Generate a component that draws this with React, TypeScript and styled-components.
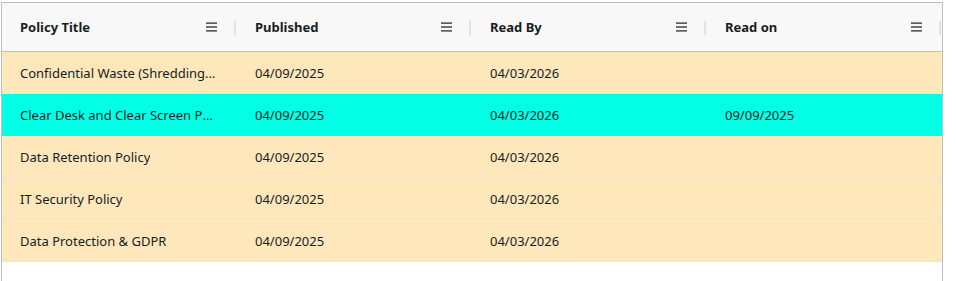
import React from "react";
import styled, { createGlobalStyle } from "styled-components";

const Global = createGlobalStyle`
  html, body { margin: 0; padding: 0; background: #ffffff; }
  body { font-family: "Noto Sans", "Open Sans", sans-serif; overflow: hidden; }
`;

const Page = styled.div`
  padding: 2px 0 0 1px;
`;

const Grid = styled.div`
  width: 940px;
  height: 300px;
  border: 1px solid #babfc7;
  background: #ffffff;
  color: #181d1f;
`;

const HeaderRow = styled.div`
  display: grid;
  grid-template-columns: repeat(4, 235px);
  height: 48px;
  background: #f8f8f8;
  border-bottom: 1px solid #babfc7;
`;

const HeaderCell = styled.div`
  position: relative;
  display: flex;
  align-items: center;
  padding: 0 20px 0 18px;
  font-weight: 700;
  font-size: 13px;
  &::after {
    content: "";
    position: absolute;
    right: 1px;
    top: 18px;
    width: 2px;
    height: 14px;
    background: #dde2eb;
  }
`;

const HeaderLabel = styled.span`
  flex: 1;
`;

const MenuIcon = styled.svg`
  width: 11px;
  height: 10px;
  display: block;
`;

const Row = styled.div<{ $selected?: boolean }>`
  display: grid;
  grid-template-columns: repeat(4, 235px);
  height: 41px;
  background: ${(p) => (p.$selected ? "#02ffe5" : "#fde7bb")};
  border-bottom: 1px solid ${(p) => (p.$selected ? "#02ffe5" : "#f0e3cc")};
`;

const Cell = styled.div`
  display: flex;
  align-items: center;
  padding: 0 18px;
  font-size: 13px;
  min-width: 0;
`;

const CellText = styled.span`
  white-space: nowrap;
  overflow: hidden;
  text-overflow: ellipsis;
`;

const columns = ["Policy Title", "Published", "Read By", "Read on"];

const rows = [
  { title: "Confidential Waste (Shredding) Policy", pub: "04/09/2025", by: "04/03/2026", on: "" },
  { title: "Clear Desk and Clear Screen Policy", pub: "04/09/2025", by: "04/03/2026", on: "09/09/2025", selected: true },
  { title: "Data Retention Policy", pub: "04/09/2025", by: "04/03/2026", on: "" },
  { title: "IT Security Policy", pub: "04/09/2025", by: "04/03/2026", on: "" },
  { title: "Data Protection & GDPR", pub: "04/09/2025", by: "04/03/2026", on: "" },
];

const Menu = () => (
  <MenuIcon viewBox="0 0 11 10">
    <rect x="0" y="0.5" width="11" height="1.2" fill="#181d1f" />
    <rect x="0" y="4.4" width="11" height="1.2" fill="#181d1f" />
    <rect x="0" y="8.3" width="11" height="1.2" fill="#181d1f" />
  </MenuIcon>
);

export default function App() {
  return (
    <Page>
      <Global />
      <Grid>
        <HeaderRow>
          {columns.map((c) => (
            <HeaderCell key={c}>
              <HeaderLabel>{c}</HeaderLabel>
              <Menu />
            </HeaderCell>
          ))}
        </HeaderRow>
        {rows.map((r) => (
          <Row key={r.title} $selected={r.selected}>
            <Cell><CellText>{r.title}</CellText></Cell>
            <Cell><CellText>{r.pub}</CellText></Cell>
            <Cell><CellText>{r.by}</CellText></Cell>
            <Cell><CellText>{r.on}</CellText></Cell>
          </Row>
        ))}
      </Grid>
    </Page>
  );
}
